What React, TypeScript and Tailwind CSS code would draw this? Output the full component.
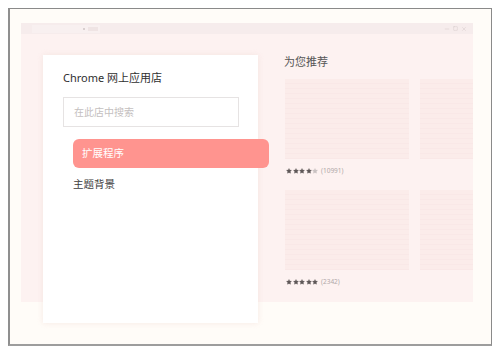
import { Minus, Square, X, Star } from 'lucide-react';

const font = { fontFamily: '"Noto Sans", "Noto Sans CJK SC", sans-serif' };

function Stars({ filled }: { filled: number }) {
  return (
    <div className="flex items-center gap-[0.5px]">
      {[0, 1, 2, 3, 4].map((i) => (
        <Star
          key={i}
          size={6}
          strokeWidth={1}
          className={i < filled ? 'fill-[#5f5858] text-[#5f5858]' : 'fill-[#c9c2c2] text-[#c9c2c2]'}
        />
      ))}
    </div>
  );
}

function Card() {
  return (
    <div className="h-[80px] w-[124px] shrink-0 bg-[repeating-linear-gradient(to_bottom,#fbecea_0px,#fbecea_4px,#f9e8e7_4px,#f9e8e7_5px)]" />
  );
}

function CardRow({ filled, count }: { filled: number; count: string }) {
  return (
    <div className="flex flex-col">
      <div className="flex gap-[11px]">
        <Card />
        <Card />
      </div>
      <div className="mt-[9px] flex items-center gap-[3px] pl-[1px]">
        <Stars filled={filled} />
        <span className="text-[6.5px] leading-none text-[#b0a8a8]">{count}</span>
      </div>
    </div>
  );
}

export default function App() {
  return (
    <div className="h-[354px] w-[500px] bg-white pl-[8px] pt-[8px]" style={font}>
      <div className="h-[338px] w-[484px] border border-[#8a8a8a] border-l-2 border-b-2 border-l-[#8f8f8f] border-b-[#9d9d9d] bg-[#fffcf8] pl-[11px] pt-[14px]">
        <div className="flex h-[279px] w-[452px] flex-col bg-[#fdf2f1]">
          {/* title bar */}
          <div className="flex h-[11px] items-center justify-between bg-[#f6ecec] pl-[11px] pr-[6px]">
            <div className="flex h-[8px] w-[68px] items-center justify-end gap-[3px] bg-[#f8f0f0] pr-[2px]">
              <span className="h-[2px] w-[2px] rounded-full bg-[#cfc4c4]" />
              <span className="h-[4px] w-[10px] bg-[#efe4e4]" />
            </div>
            <div className="flex items-center gap-[3px] text-[#cbbfbf]">
              <Minus size={6} strokeWidth={1.5} />
              <Square size={5} strokeWidth={1.5} />
              <X size={6} strokeWidth={1.5} />
            </div>
          </div>

          {/* body */}
          <div className="flex h-[268px] pl-[22px] pt-[21px]">
            <div className="h-[268px] w-[215px] shrink-0 bg-white pl-[20px] pt-[15px] shadow-[0_0_6px_rgba(240,220,215,0.6)]">
              <div className="text-[11px] leading-[16px] text-[#2f2f2f]">Chrome 网上应用店</div>
              <div className="mt-[11px] flex h-[30px] w-[176px] items-center border border-[#e6e3e3] pl-[10px] text-[10px] text-[#c4c0c0]">
                在此店中搜索
              </div>
              <div className="ml-[10px] mt-[12px] flex h-[29px] w-[196px] items-center rounded-[6px] bg-[#ff948f] pl-[9px] text-[10.5px] text-white">
                扩展程序
              </div>
              <div className="ml-[10px] mt-[9px] text-[10.5px] leading-[15px] text-[#3d3d3d]">主题背景</div>
            </div>

            <div className="ml-[26px] min-w-0 flex-1 overflow-hidden">
              <div className="text-[11px] leading-[14px] text-[#555]">为您推荐</div>
              <div className="mt-[10px] pl-[1px]">
                <CardRow filled={4} count="(10991)" />
              </div>
              <div className="mt-[15px] pl-[1px]">
                <CardRow filled={5} count="(2342)" />
              </div>
            </div>
          </div>
        </div>
      </div>
    </div>
  );
}
